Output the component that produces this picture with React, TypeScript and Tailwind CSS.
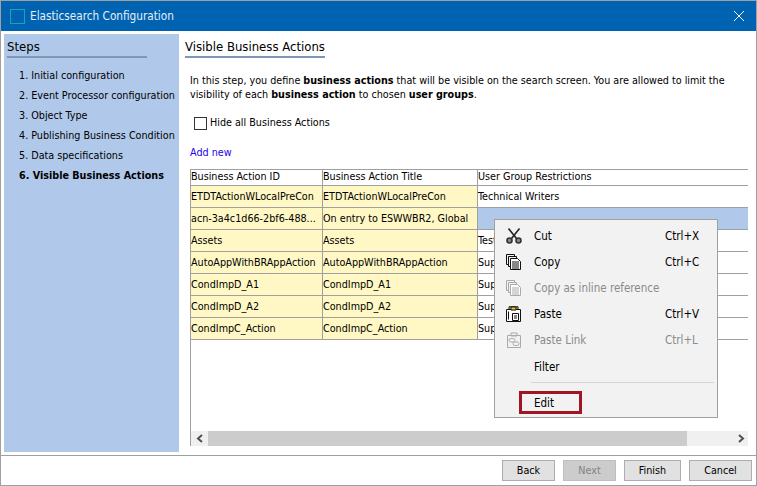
const font = "font-['DejaVu_Sans_Condensed','Noto_Sans',sans-serif]";

const steps = [
  'Initial configuration',
  'Event Processor configuration',
  'Object Type',
  'Publishing Business Condition',
  'Data specifications',
];

const rows = [
  ['ETDTActionWLocalPreCon', 'ETDTActionWLocalPreCon', 'Technical Writers'],
  ['acn-3a4c1d66-2bf6-488...', 'On entry to ESWWBR2, Global', ''],
  ['Assets', 'Assets', 'Test'],
  ['AutoAppWithBRAppAction', 'AutoAppWithBRAppAction', 'Sup'],
  ['CondImpD_A1', 'CondImpD_A1', 'Sup'],
  ['CondImpD_A2', 'CondImpD_A2', 'Sup'],
  ['CondImpC_Action', 'CondImpC_Action', 'Sup'],
];

function CutIcon() {
  return (
    <svg width="16" height="16" viewBox="0 0 16 16" fill="none" stroke="#222" strokeWidth="1.6">
      <path d="M2.5 .5l8 10M13.5 .5l-8 10" />
      <circle cx="3.5" cy="12.5" r="2.5" fill="#8a8a8a" stroke="#333" />
      <circle cx="12.5" cy="12.5" r="2.5" fill="#8a8a8a" stroke="#333" />
    </svg>
  );
}

function CopyIcon({ color = '#111' }: { color?: string }) {
  return (
    <svg width="16" height="16" viewBox="0 0 16 16" fill="none" stroke={color}>
      <path d="M.5 .5h8v2M.5 .5v10h2" />
      <path d="M2.5 2.5h8v2M2.5 2.5v10h2" />
      <path d="M4.5 4.5h7l3 3v8h-10z" fill="#fff" />
      <path d="M6 8h7M6 10h7M6 12h7M6 14h7" />
    </svg>
  );
}

function PasteIcon() {
  return (
    <svg width="16" height="16" viewBox="0 0 16 16" fill="none" stroke="#111">
      <path d="M.5 3.5h14v12H.5z" fill="#fff" />
      <path d="M3 3V.8h9V3" fill="#f5dc6c" />
      <path d="M5 1h5v3H5z" fill="#f0c830" />
      <path d="M2.5 5.5v8M6.5 7.5h6v7h-6zM8 10h3M8 12h3" />
    </svg>
  );
}

function PasteLinkIcon() {
  return (
    <svg width="16" height="16" viewBox="0 0 16 16" fill="none" stroke="#aaa">
      <path d="M1.5 3.5h13v12h-13z" />
      <path d="M5 1h6v3H5z" />
      <rect x="3" y="6.5" width="6" height="3.5" rx="1.7" />
      <rect x="7" y="10" width="6" height="3.5" rx="1.7" />
    </svg>
  );
}

function MenuItem({ icon, label, keys, disabled, h = 'h-[26px]' }: { icon?: React.ReactNode; label: string; keys?: string; disabled?: boolean; h?: string }) {
  return (
    <div className={`flex items-center ${h} ${disabled ? 'text-[#8a8a8a]' : 'text-black'}`}>
      <div className="w-[39px] pl-[11px] flex items-center">{icon}</div>
      <div className="flex-1 whitespace-nowrap">{label}</div>
      <div className="w-[52px]">{keys}</div>
    </div>
  );
}

function ContextMenu() {
  return (
    <div className="absolute left-[493px] top-[218px] w-[224px] h-[199px] bg-[#f2f2f2] border border-[#a0a0a0] pt-[3px] text-[11.5px]">
      <MenuItem icon={<CutIcon />} label="Cut" keys="Ctrl+X" />
      <MenuItem icon={<CopyIcon />} label="Copy" keys="Ctrl+C" />
      <MenuItem icon={<CopyIcon color="#aaa" />} label="Copy as inline reference" disabled />
      <MenuItem icon={<PasteIcon />} label="Paste" keys="Ctrl+V" />
      <MenuItem icon={<PasteLinkIcon />} label="Paste Link" keys="Ctrl+L" disabled />
      <MenuItem label="Filter" h="h-[27px]" />
      <div className="ml-[36px] mr-[3px] mt-[2px] h-px bg-[#d4d4d4]" />
      <div className="relative">
        <MenuItem label="Edit" h="h-[40px]" />
        <div className="absolute left-[24px] top-[8px] w-[63px] h-[23px] border-[3px] border-[#a01622]" />
      </div>
    </div>
  );
}

function DialogButton({ label, disabled }: { label: string; disabled?: boolean }) {
  return (
    <div className={`h-[21px] flex items-center justify-center border ${disabled ? 'bg-[#cccccc] border-[#bfbfbf] text-[#838383]' : 'bg-[#e1e1e1] border-[#adadad] text-black'} ${label === 'Back' || label === 'Next' ? 'w-[53px]' : label === 'Finish' ? 'w-[57px]' : 'w-[63px]'}`}>
      {label}
    </div>
  );
}

export default function App() {
  return (
    <div className={`relative w-[757px] h-[486px] flex flex-col bg-white border border-[#a0a0a0] text-[10.7px] leading-[14px] text-black overflow-hidden ${font}`}>
      <div className="h-[30px] shrink-0 bg-[#0063b1] flex items-center pl-[9px] pr-[11px] text-white">
        <div className="w-[15px] h-[15px] border border-[#1ba1b8] mr-[5px]" />
        <span className="flex-1 text-[#e6eef6] text-[11.7px]">Elasticsearch Configuration</span>
        <svg width="12" height="12" viewBox="0 0 12 12" stroke="#fff" strokeWidth="1"><path d="M1 1l10 10M11 1L1 11" /></svg>
      </div>

      <div className="flex-1 flex pt-[3px] pl-[3px] min-h-0">
        <div className="w-[175px] h-[418px] bg-[#b0c9ea] pl-[3px] pt-[3px] shrink-0">
          <div className="w-[140px] h-[21px] border-b-2 border-[#7f97b5] text-[13px] leading-[19px]">Steps</div>
          <div className="mt-[8px] pl-[12px] flex flex-col">
            {steps.map((s, i) => (
              <div key={s} className="h-[20px] flex items-center whitespace-nowrap">{i + 1}. {s}</div>
            ))}
            <div className="h-[20px] flex items-center font-bold whitespace-nowrap">6. Visible Business Actions</div>
          </div>
        </div>

        <div className="flex-1 min-w-0 pl-[6px] pt-[3px]">
          <div className="w-[140px] h-[21px] border-b-2 border-[#7f97b5] text-[13px] leading-[19px] whitespace-nowrap">Visible Business Actions</div>
          <p className="ml-[5px] mt-[16px] w-[550px]">
            In this step, you define <b>business actions</b> that will be visible on the search screen. You are allowed to limit the visibility of each <b>business action</b> to chosen <b>user groups</b>.
          </p>
          <div className="ml-[9px] mt-[14px] flex items-center">
            <div className="w-[13px] h-[13px] border border-[#333] mr-[3px]" />
            Hide all Business Actions
          </div>
          <div className="ml-[5px] mt-[16px] text-[#2200ee]">Add new</div>

          <div className="ml-[5px] mt-[9px] w-[558px] h-[277px] border-t border-l border-[#a0a0a0] flex flex-col">
            <div className="flex h-[16px] border-b border-[#a0a0a0] shrink-0">
              <div className="w-[132px] border-r border-[#a0a0a0]">Business Action ID</div>
              <div className="w-[155px] border-r border-[#a0a0a0]">Business Action Title</div>
              <div className="flex-1">User Group Restrictions</div>
            </div>
            {rows.map((r, i) => (
              <div key={r[0]} className="flex h-[22px] border-b border-[#a0a0a0] shrink-0 items-stretch">
                <div className="w-[132px] border-r border-[#a0a0a0] bg-[#fff8c4] flex items-center whitespace-nowrap overflow-hidden">{r[0]}</div>
                <div className="w-[155px] border-r border-[#a0a0a0] bg-[#fff8c4] flex items-center whitespace-nowrap overflow-hidden">{r[1]}</div>
                <div className={`flex-1 flex items-center ${i === 1 ? 'bg-[#b0c9ea]' : ''}`}>{r[2]}</div>
              </div>
            ))}
            <div className="flex-1" />
            <div className="h-[15px] flex bg-[#f0f0f0] items-center shrink-0">
              <div className="w-[17px] flex justify-center">
                <svg width="8" height="9" viewBox="0 0 8 9" fill="none" stroke="#505050" strokeWidth="2"><path d="M6 1L2 4.5 6 8" /></svg>
              </div>
              <div className="w-[479px] h-full bg-[#cccccc]" />
              <div className="flex-1 flex justify-end pr-[3px]">
                <svg width="8" height="9" viewBox="0 0 8 9" fill="none" stroke="#505050" strokeWidth="2"><path d="M2 1l4 3.5L2 8" /></svg>
              </div>
            </div>
          </div>
        </div>
      </div>

      <div className="h-[30px] shrink-0 border-t border-[#a0a0a0] flex justify-end items-start pt-[4px] pr-[4px] gap-[8px]">
        <DialogButton label="Back" />
        <DialogButton label="Next" disabled />
        <DialogButton label="Finish" />
        <DialogButton label="Cancel" />
      </div>

      <ContextMenu />
    </div>
  );
}
